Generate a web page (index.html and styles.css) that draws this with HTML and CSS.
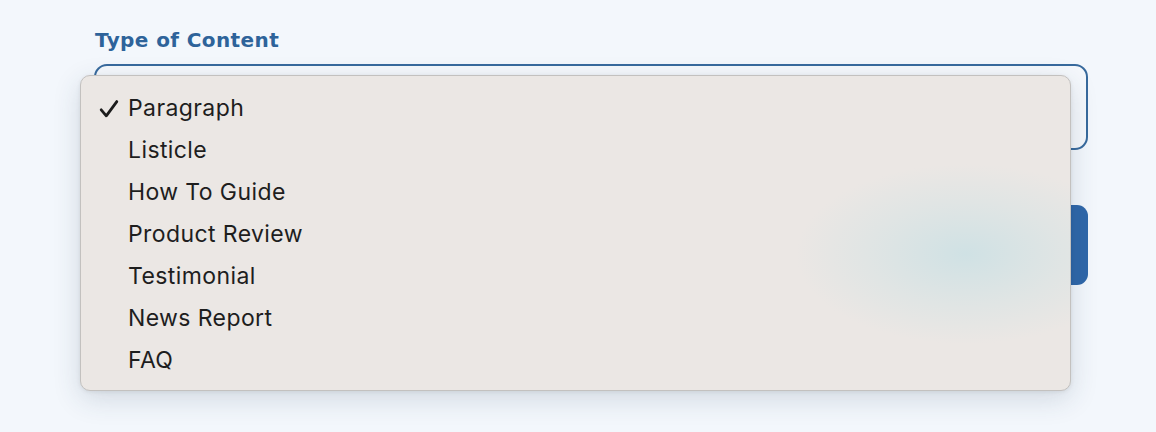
FILE: index.html
```html
<!DOCTYPE html>
<html>
<head>
<meta charset="utf-8">
<link rel="stylesheet" href="styles.css">
</head>
<body>
<div class="page">
  <div class="field">
    <label class="label">Type of Content</label>
    <div class="select"></div>
    <div class="button"></div>
  </div>
  <ul class="menu">
    <li class="item selected"><svg class="check" viewBox="0 0 20 20" width="20" height="20"><path d="M2.2 10.8 L7.3 16.8 L17.8 2.6" fill="none" stroke="#1c1c1c" stroke-width="2.8" stroke-linecap="round" stroke-linejoin="round"/></svg>Paragraph</li>
    <li class="item">Listicle</li>
    <li class="item">How To Guide</li>
    <li class="item">Product Review</li>
    <li class="item">Testimonial</li>
    <li class="item">News Report</li>
    <li class="item">FAQ</li>
  </ul>
</div>
</body>
</html>
```

FILE: styles.css
```css
html, body {
  margin: 0;
  padding: 0;
  background: #f3f7fc;
  width: 1156px;
  height: 432px;
  overflow: hidden;
}
.page {
  position: relative;
  width: 1156px;
  height: 432px;
}
.field {
  padding: 28px 0 0 94px;
  width: 994px;
  display: flex;
  flex-direction: column;
}
.label {
  font-family: "DejaVu Sans", sans-serif;
  font-weight: 700;
  font-size: 20px;
  line-height: 24px;
  letter-spacing: 0.4px;
  color: #2e639a;
  padding-left: 1px;
}
.select {
  margin-top: 12px;
  height: 82px;
  border: 2px solid #386a9d;
  border-radius: 13px;
  background: #f5f8fc;
}
.button {
  margin-top: 55px;
  height: 80px;
  background: #2f67a9;
  border-radius: 11px;
}
.menu {
  position: absolute;
  left: 80px;
  top: 75px;
  width: 989px;
  height: 293px;
  margin: 0;
  padding: 11px 0 10px 0;
  list-style: none;
  border: 1px solid #c3c1bf;
  border-radius: 10px;
  background:
    radial-gradient(ellipse 170px 90px at 885px 178px, rgba(206,225,228,0.95), rgba(214,227,228,0.55) 55%, rgba(235,231,228,0) 100%),
    #ebe7e4;
  box-shadow: 0 8px 28px rgba(40,60,90,0.16), 0 1px 4px rgba(0,0,0,0.08);
}
.item {
  position: relative;
  height: 42px;
  line-height: 42px;
  padding-left: 47px;
  font-family: "Inter", "Noto Sans", sans-serif;
  font-size: 23px;
  letter-spacing: 0.4px;
  color: #1e1e1e;
}
.check {
  position: absolute;
  left: 18px;
  top: 12px;
}
```
